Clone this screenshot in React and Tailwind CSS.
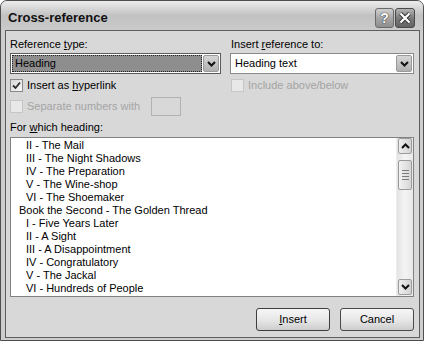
import React from "react";

const items = [
  { t: "II - The Mail", l: 2 },
  { t: "III - The Night Shadows", l: 2 },
  { t: "IV - The Preparation", l: 2 },
  { t: "V - The Wine-shop", l: 2 },
  { t: "VI - The Shoemaker", l: 2 },
  { t: "Book the Second - The Golden Thread", l: 1 },
  { t: "I - Five Years Later", l: 2 },
  { t: "II - A Sight", l: 2 },
  { t: "III - A Disappointment", l: 2 },
  { t: "IV - Congratulatory", l: 2 },
  { t: "V - The Jackal", l: 2 },
  { t: "VI - Hundreds of People", l: 2 },
];

function Chevron({ up }) {
  return (
    <svg width="9" height="6" viewBox="0 0 9 6">
      <path
        d={up ? "M1 5 L4.5 1.5 L8 5" : "M1 1 L4.5 4.5 L8 1"}
        stroke="#111"
        strokeWidth="2"
        fill="none"
      />
    </svg>
  );
}

function ComboArrow() {
  return (
    <div className="w-[16px] h-full border border-[#9a9a9a] rounded-[2px] bg-gradient-to-b from-[#d6d6d6] to-[#b0b0b0] flex items-center justify-center">
      <Chevron />
    </div>
  );
}

function Check({ checked, disabled }) {
  return (
    <div
      className={`w-[13px] h-[13px] shrink-0 border flex items-center justify-center ${
        disabled
          ? "border-[#c6c6c6] bg-[#e8e8e8]"
          : "border-[#8a8a8a] bg-gradient-to-br from-[#d8d8d8] to-[#f8f8f8]"
      }`}
    >
      {checked && (
        <svg width="11" height="11" viewBox="0 0 11 11">
          <path d="M2 5.5 L4.5 8 L9 2.5" stroke="#2e2e2e" strokeWidth="1.8" fill="none" />
        </svg>
      )}
    </div>
  );
}

function ScrollBtn({ up }) {
  return (
    <div className="h-[16px] mx-[1px] border border-[#9c9c9c] rounded-[2px] bg-gradient-to-r from-[#efefef] to-[#d2d2d2] flex items-center justify-center">
      <Chevron up={up} />
    </div>
  );
}

export default function App() {
  return (
    <div className="w-[424px] h-[341px] flex flex-col bg-[#cdcdcd] border border-[#4e4e4e] rounded-t-[7px] overflow-hidden font-['Liberation_Sans',Arial,sans-serif] text-[11px] text-black">
      {/* Title bar */}
      <div className="h-[29px] shrink-0 flex items-center pt-[4px] pl-[7px] pr-[8px] bg-gradient-to-b from-[#ececec] via-[#c2c2c2] to-[#cacaca]">
        <div className="flex-1 text-[13px] font-bold text-[#111]">Cross-reference</div>
        <div className="flex gap-[1px]">
          <div className="w-[19px] h-[20px] rounded-[3px] border border-[#6a6a6a] bg-gradient-to-b from-[#d0d0d0] via-[#a6a6a6] to-[#8e8e8e] flex items-center justify-center text-white font-bold text-[14px] leading-none [text-shadow:0_0_1px_#222,0_0_1px_#222]">
            ?
          </div>
          <div className="w-[20px] h-[20px] rounded-[3px] border border-[#4a4a4a] bg-gradient-to-b from-[#b4b4b4] via-[#7c7c7c] to-[#626262] flex items-center justify-center">
            <svg width="14" height="14" viewBox="0 0 14 14">
              <path d="M2.5 2.5 L11.5 11.5 M11.5 2.5 L2.5 11.5" stroke="#333" strokeWidth="4" />
              <path d="M2.5 2.5 L11.5 11.5 M11.5 2.5 L2.5 11.5" stroke="#fff" strokeWidth="2.2" />
            </svg>
          </div>
        </div>
      </div>

      {/* Client area */}
      <div className="flex-1 ml-[4px] mr-[3px] mb-[3px] border border-[#5e5e5e] bg-[#d8d8d8] flex flex-col pl-[4px] pr-[4px] pt-[7px] pb-[6px]">
        <div className="grid grid-cols-[211px_184px] gap-x-[9px]">
          {/* Left column */}
          <div className="flex flex-col">
            <div className="h-[13px] leading-[13px]">
              Reference <u>t</u>ype:
            </div>
            <div className="mt-[2px] h-[21px] flex border border-[#5a5a5a] bg-white p-[1px]">
              <div className="flex-1 h-full flex items-center bg-[#8e8e8e] border border-dotted border-[#222] pl-[2px] mr-[1px]">
                Heading
              </div>
              <ComboArrow />
            </div>
            <div className="mt-[5px] h-[13px] flex items-center gap-[4px]">
              <Check checked />
              <span>
                Insert as <u>h</u>yperlink
              </span>
            </div>
            <div className="mt-[5px] h-[19px] flex items-center">
              <Check disabled />
              <span className="ml-[4px] text-[#a4a4a4]">Separate numbers with</span>
              <div className="ml-[11px] w-[30px] h-[19px] border border-[#b2b2b2] bg-[#d8d8d8]" />
            </div>
          </div>
          {/* Right column */}
          <div className="flex flex-col">
            <div className="h-[13px] leading-[13px] pl-[1px]">
              Insert <u>r</u>eference to:
            </div>
            <div className="mt-[2px] h-[21px] flex border border-[#8a8a8a] bg-white p-[1px]">
              <div className="flex-1 h-full flex items-center pl-[3px]">Heading text</div>
              <ComboArrow />
            </div>
            <div className="mt-[5px] h-[13px] flex items-center gap-[4px] pl-[1px]">
              <Check disabled />
              <span className="text-[#a4a4a4]">Include above/below</span>
            </div>
          </div>
        </div>

        <div className="mt-[5px] h-[13px] leading-[13px]">
          For <u>w</u>hich heading:
        </div>

        {/* List box */}
        <div className="mt-[3px] w-[404px] h-[160px] border border-[#828282] bg-white flex">
          <div className="flex-1 pt-[1px] overflow-hidden">
            {items.map((it, i) => (
              <div
                key={i}
                className={`h-[13px] leading-[13px] whitespace-nowrap ${it.l === 1 ? "pl-[8px]" : "pl-[15px]"}`}
              >
                {it.t}
              </div>
            ))}
          </div>
          <div className="w-[17px] h-full flex flex-col bg-gradient-to-r from-[#e4e4e4] via-[#f4f4f4] to-[#e8e8e8] border-l border-[#ececec]">
            <ScrollBtn up />
            <div className="mt-[6px] h-[30px] mx-[1px] border border-[#9a9a9a] rounded-[2px] bg-gradient-to-r from-[#f2f2f2] to-[#d6d6d6] flex flex-col items-center justify-center gap-[2px]">
              <div className="w-[7px] h-px bg-[#7a7a7a]" />
              <div className="w-[7px] h-px bg-[#7a7a7a]" />
              <div className="w-[7px] h-px bg-[#7a7a7a]" />
              <div className="w-[7px] h-px bg-[#7a7a7a]" />
            </div>
            <div className="flex-1" />
            <div className="mb-[1px]">
              <ScrollBtn />
            </div>
          </div>
        </div>

        {/* Buttons */}
        <div className="mt-[11px] flex justify-end gap-[10px] pr-[1px]">
          <div className="w-[74px] h-[23px] rounded-[3px] border border-[#3e3e3e] bg-gradient-to-b from-[#f6f6f6] via-[#e8e8e8] to-[#cdcdcd] flex items-center justify-center">
            <span>
              <u>I</u>nsert
            </span>
          </div>
          <div className="w-[74px] h-[23px] rounded-[3px] border border-[#4a4a4a] bg-gradient-to-b from-[#f6f6f6] via-[#e8e8e8] to-[#cdcdcd] flex items-center justify-center">
            Cancel
          </div>
        </div>
      </div>
    </div>
  );
}
